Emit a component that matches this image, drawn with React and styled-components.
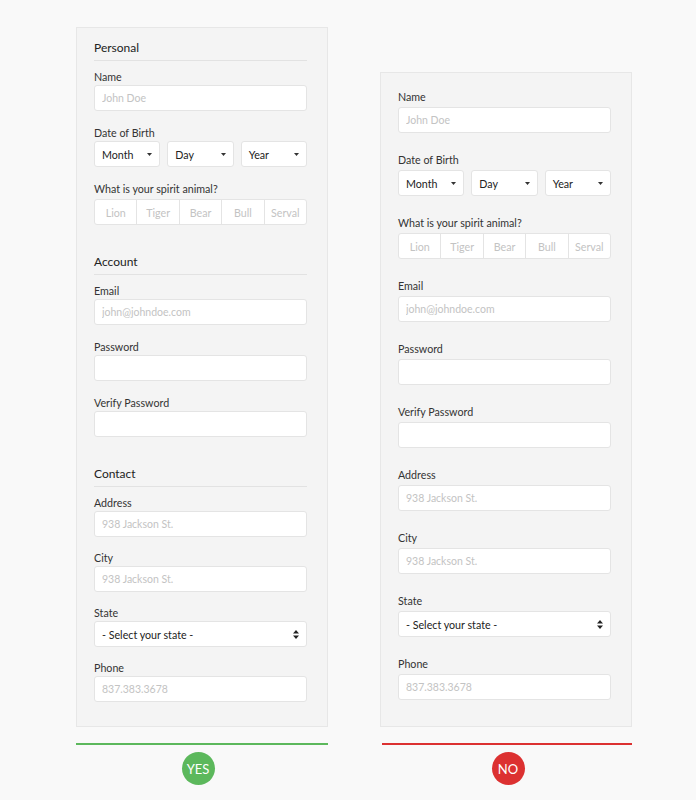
import React from 'react';
import styled, { createGlobalStyle } from 'styled-components';

const GlobalStyle = createGlobalStyle`
  body {
    margin: 0;
    background: #f9f9f9;
    font-family: Lato, "Open Sans", "Liberation Sans", sans-serif;
    color: #333;
  }
  * { box-sizing: border-box; }
`;

const animals = ['Lion', 'Tiger', 'Bear', 'Bull', 'Serval'];

function Caret() {
  return (
    <svg width="5" height="3" viewBox="0 0 5 3">
      <path d="M0 0h5L2.5 3z" fill="#333" />
    </svg>
  );
}

function UpDown() {
  return (
    <svg width="6" height="9" viewBox="0 0 6 9">
      <path d="M0 3.6L3 0l3 3.6zM0 5.4h6L3 9z" fill="#222" />
    </svg>
  );
}

function TextField({ label, placeholder, type = 'text' }) {
  return (
    <Field>
      <Label>{label}</Label>
      <Input type={type} placeholder={placeholder} />
    </Field>
  );
}

function BirthField() {
  return (
    <Field>
      <Label>Date of Birth</Label>
      <DateRow>
        {['Month', 'Day', 'Year'].map((part) => (
          <Dropdown key={part}>
            <span>{part}</span>
            <Caret />
          </Dropdown>
        ))}
      </DateRow>
    </Field>
  );
}

function AnimalField() {
  return (
    <Field>
      <Label>What is your spirit animal?</Label>
      <ButtonGroup>
        {animals.map((a) => (
          <GroupButton key={a}>{a}</GroupButton>
        ))}
      </ButtonGroup>
    </Field>
  );
}

function StateField() {
  return (
    <Field>
      <Label>State</Label>
      <Dropdown>
        <span>- Select your state -</span>
        <UpDown />
      </Dropdown>
    </Field>
  );
}

// the same fields, once grouped under headings and once as a flat list
function GroupedForm() {
  return (
    <Card>
      <Section>
        <Heading>Personal</Heading>
        <TextField label="Name" placeholder="John Doe" />
        <BirthField />
        <AnimalField />
      </Section>
      <Section>
        <Heading>Account</Heading>
        <TextField label="Email" placeholder="john@johndoe.com" />
        <TextField label="Password" type="password" />
        <TextField label="Verify Password" type="password" />
      </Section>
      <Section $gap="14px">
        <Heading>Contact</Heading>
        <TextField label="Address" placeholder="938 Jackson St." />
        <TextField label="City" placeholder="938 Jackson St." />
        <StateField />
        <TextField label="Phone" placeholder="837.383.3678" />
      </Section>
    </Card>
  );
}

function FlatForm() {
  return (
    <Card $flat>
      <TextField label="Name" placeholder="John Doe" />
      <BirthField />
      <AnimalField />
      <TextField label="Email" placeholder="john@johndoe.com" />
      <TextField label="Password" type="password" />
      <TextField label="Verify Password" type="password" />
      <TextField label="Address" placeholder="938 Jackson St." />
      <TextField label="City" placeholder="938 Jackson St." />
      <StateField />
      <TextField label="Phone" placeholder="837.383.3678" />
    </Card>
  );
}

export default function App() {
  return (
    <>
      <GlobalStyle />
      <Page>
        <Column>
          <GroupedForm />
          <Rule $color="#5cb85c" />
          <Verdict $color="#5cb85c" $shift={-4}>YES</Verdict>
        </Column>
        <Column>
          <FlatForm />
          <Rule $color="#dc3131" $inset />
          <Verdict $color="#dc3131" $shift={2}>NO</Verdict>
        </Column>
      </Page>
    </>
  );
}

const Page = styled.div`
  display: flex;
  align-items: flex-end;
  gap: 52px;
  padding: 27px 0 0 76px;
`;

const Column = styled.div`
  width: 252px;
  display: flex;
  flex-direction: column;
  align-items: center;
`;

const Card = styled.div`
  width: 100%;
  background: #f4f4f4;
  border: 1px solid #e7e7e7;
  padding: ${(p) => (p.$flat ? '17px 20px 26px 17px' : '11px 20px 24px 17px')};
  --field-gap: ${(p) => (p.$flat ? '20px' : '15px')};
  --label-gap: ${(p) => (p.$flat ? '3px' : '1px')};
  --group-gap: 3px;
`;

const Section = styled.div`
  ${(p) => p.$gap && `--field-gap: ${p.$gap};`}
  & + & {
    margin-top: 28px;
  }
`;

const Heading = styled.div`
  font-size: 12px;
  line-height: 18px;
  color: #222;
  padding-bottom: 3px;
  border-bottom: 1px solid #e2e2e2;
  margin-bottom: 9px;
`;

const Field = styled.div`
  margin-bottom: var(--field-gap);
  &:last-child {
    margin-bottom: 0;
  }
`;

const Label = styled.div`
  font-size: 10.7px;
  line-height: 14px;
  color: #333;
  margin-bottom: var(--label-gap);
`;

const Input = styled.input`
  display: block;
  width: 100%;
  height: 26px;
  padding: 0 7px;
  background: #fff;
  border: 1px solid #e4e4e4;
  border-radius: 3px;
  font-family: inherit;
  font-size: 10.5px;
  color: #333;
  outline: none;
  &::placeholder {
    color: #c3c3c3;
  }
`;

const DateRow = styled.div`
  display: grid;
  grid-template-columns: repeat(3, 1fr);
  gap: 7px;
`;

const Dropdown = styled.div`
  display: flex;
  align-items: center;
  justify-content: space-between;
  height: 26px;
  padding: 0 7px;
  background: #fff;
  border: 1px solid #e4e4e4;
  border-radius: 3px;
  font-size: 10.7px;
  color: #222;
`;

const ButtonGroup = styled.div`
  display: flex;
  height: 26px;
  margin-top: var(--group-gap);
  background: #fff;
  border: 1px solid #e4e4e4;
  border-radius: 3px;
`;

const GroupButton = styled.div`
  flex: 1;
  display: flex;
  align-items: center;
  justify-content: center;
  font-size: 10.7px;
  color: #c3c3c3;
  & + & {
    border-left: 1px solid #e4e4e4;
  }
`;

const Rule = styled.div`
  align-self: stretch;
  height: 2px;
  margin: 16px 0 0 ${(p) => (p.$inset ? '2px' : '0')};
  background: ${(p) => p.$color};
`;

const Verdict = styled.div`
  width: 33px;
  height: 33px;
  margin-top: 7px;
  margin-left: ${(p) => p.$shift * 2}px;
  border-radius: 50%;
  display: flex;
  align-items: center;
  justify-content: center;
  background: ${(p) => p.$color};
  color: #fff;
  font-size: 13px;
`;
